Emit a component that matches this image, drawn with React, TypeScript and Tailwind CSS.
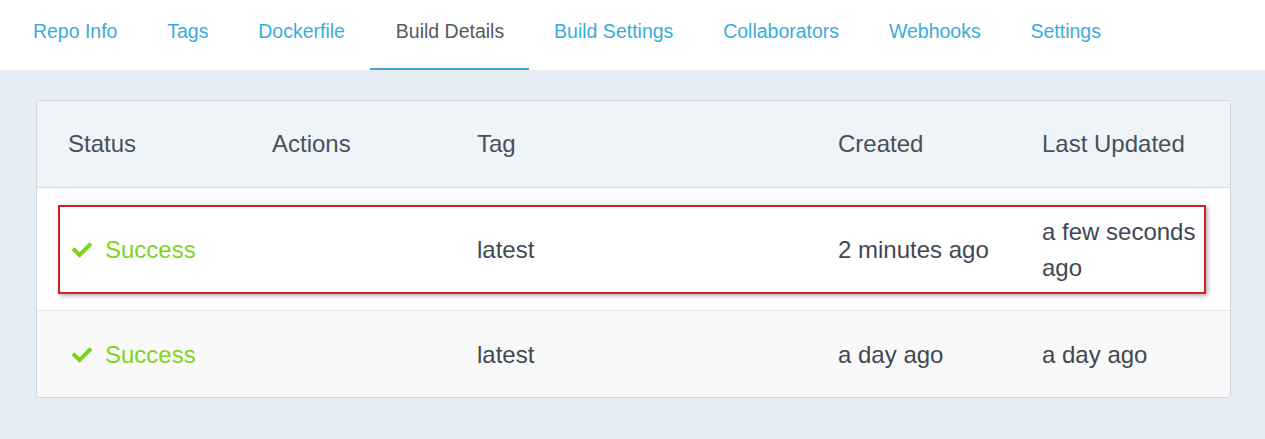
import { FaCheck } from "react-icons/fa";

const tabs = [
  "Repo Info",
  "Tags",
  "Dockerfile",
  "Build Details",
  "Build Settings",
  "Collaborators",
  "Webhooks",
  "Settings",
];

const builds = [
  { status: "Success", tag: "latest", created: "2 minutes ago", updated: "a few seconds ago", highlight: true },
  { status: "Success", tag: "latest", created: "a day ago", updated: "a day ago", highlight: false },
];

const cols = "grid grid-cols-[204px_205px_361px_204px_1fr]";

const App = () => {
  return (
    <div
      className="min-h-screen bg-[#e6ecf4]"
      style={{ fontFamily: '"Liberation Sans", Arial, sans-serif' }}
    >
      <nav className="flex h-[70px] bg-white pl-[8px]">
        {tabs.map((tab) => {
          const active = tab === "Build Details";
          return (
            <a
              key={tab}
              href="#"
              className={
                active
                  ? "flex h-full items-center border-b-2 border-[#3ea7d3] pl-[26px] pr-[25px] pb-[4px] text-[19.5px] text-[#555a5f]"
                  : "flex h-full items-center border-b-2 border-transparent px-[24.9px] pb-[4px] text-[19.5px] text-[#3aacdc]"
              }
            >
              {tab}
            </a>
          );
        })}
      </nav>

      <div className="pl-9 pr-[34px] pt-[30px] pb-10">
        <div className="overflow-hidden rounded-[4px] border border-[#cdd6e1] bg-white text-[24px] leading-[36px]">
          <div className={`${cols} border-b border-[#d3dbe5] bg-[#eff4f9] text-[#47505c]`}>
            {["Status", "Actions", "Tag", "Created", "Last Updated"].map((h) => (
              <div key={h} className="py-[25px] pl-[31px]">
                {h}
              </div>
            ))}
          </div>

          {builds.map((b, i) => (
            <div
              key={i}
              className={`${cols} relative text-[#3f4853] ${
                i === 0 ? "border-b border-[#e3e7eb] bg-white" : "bg-[#f9f9f9]"
              }`}
            >
              <div className="flex items-center gap-[13px] pt-[26px] pb-[24px] pl-[35px] text-[#7ed321]">
                <FaCheck className="h-[20px] w-[20px]" />
                <span>{b.status}</span>
              </div>
              <div className="pt-[26px] pb-[24px] pl-[31px]"></div>
              <div className="flex items-center pt-[26px] pb-[24px] pl-[31px]">{b.tag}</div>
              <div className="flex items-center pt-[26px] pb-[24px] pl-[31px]">{b.created}</div>
              <div className="flex items-center pt-[26px] pb-[24px] pl-[31px] pr-[28px]">{b.updated}</div>
              {b.highlight && (
                <div className="pointer-events-none absolute top-[17px] right-[24px] bottom-[16px] left-[21px] border-2 border-[#d01f28] shadow-[2px_2px_4px_rgba(0,0,0,0.3)]" />
              )}
            </div>
          ))}
        </div>
      </div>
    </div>
  );
};

export default App;
